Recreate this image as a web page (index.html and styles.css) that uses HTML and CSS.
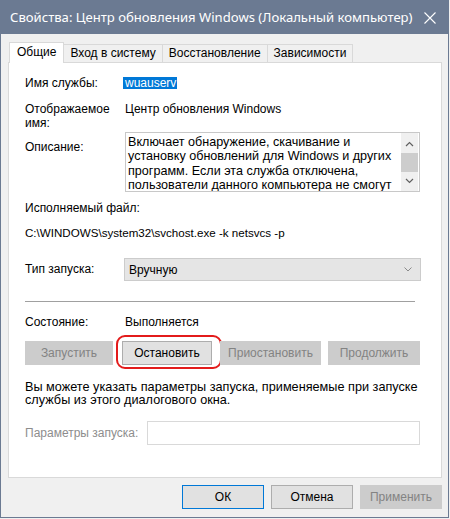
FILE: index.html
```html
<!DOCTYPE html>
<html lang="ru">
<head>
<meta charset="utf-8">
<title>Свойства</title>
<link rel="stylesheet" href="styles.css">
</head>
<body>
<div class="window">
  <div class="titlebar">
    <span class="title">Свойства: Центр обновления Windows (Локальный компьютер)</span>
    <svg class="close" width="12" height="12" viewBox="0 0 12 12"><path d="M0.5 0.5 L11.5 11.5 M11.5 0.5 L0.5 11.5" stroke="#fff" stroke-width="1.1" fill="none"/></svg>
  </div>
  <div class="body">
    <div class="tabs">
      <div class="tab active">Общие</div>
      <div class="tab">Вход в систему</div>
      <div class="tab">Восстановление</div>
      <div class="tab">Зависимости</div>
    </div>
    <div class="panel">
      <div class="row r-name">
        <div class="label">Имя службы:</div>
        <div class="value"><span class="sel">wuauserv</span></div>
      </div>
      <div class="row r-disp">
        <div class="label">Отображаемое<br>имя:</div>
        <div class="value">Центр обновления Windows</div>
      </div>
      <div class="row r-desc">
        <div class="label desc-label">Описание:</div>
        <div class="textbox">
          <div class="tb-text">Включает обнаружение, скачивание и установку обновлений для Windows и других программ. Если эта служба отключена, пользователи данного компьютера не смогут</div>
          <div class="scrollbar">
            <svg class="arr" width="9" height="6" viewBox="0 0 9 6"><path d="M1 5 L4.5 1.5 L8 5" stroke="#606060" stroke-width="1.2" fill="none"/></svg>
            <div class="thumb"></div>
            <svg class="arr" width="9" height="6" viewBox="0 0 9 6"><path d="M1 1 L4.5 4.5 L8 1" stroke="#606060" stroke-width="1.2" fill="none"/></svg>
          </div>
        </div>
      </div>
      <div class="line r-exe">Исполняемый файл:</div>
      <div class="line r-path">C:\WINDOWS\system32\svchost.exe -k netsvcs -p</div>
      <div class="row r-type">
        <div class="label">Тип запуска:</div>
        <div class="combo">
          <span>Вручную</span>
          <svg width="8" height="5" viewBox="0 0 8 5"><path d="M0.5 0.5 L4 4 L7.5 0.5" stroke="#8a8a8a" stroke-width="1" fill="none"/></svg>
        </div>
      </div>
      <div class="sep"></div>
      <div class="row r-state">
        <div class="label">Состояние:</div>
        <div class="value">Выполняется</div>
      </div>
      <div class="buttons">
        <div class="btn disabled b1">Запустить</div>
        <div class="btn b2">Остановить<span class="ring"></span></div>
        <div class="btn disabled b3">Приостановить</div>
        <div class="btn disabled b4">Продолжить</div>
      </div>
      <div class="note">Вы можете указать параметры запуска, применяемые при запуске службы из этого диалогового окна.</div>
      <div class="row r-params">
        <div class="plabel">Параметры запуска:</div>
        <div class="input"></div>
      </div>
    </div>
    <div class="footer">
      <div class="btn fbtn default">ОК</div>
      <div class="btn fbtn">Отмена</div>
      <div class="btn fbtn disabled">Применить</div>
    </div>
  </div>
</div>
</body>
</html>
```
FILE: styles.css
```css
html, body {
  margin: 0;
  padding: 0;
  background: #f0f0f0;
}
body {
  font-family: "Liberation Sans", Arial, sans-serif;
  font-size: 12px;
  color: #000;
}
.window {
  width: 447px;
  height: 517px;
  border: 1px solid #6b7a92;
  border-top: none;
  background: #f0f0f0;
}
.titlebar {
  height: 34px;
  background: #6b7a92;
  display: flex;
  align-items: center;
  justify-content: space-between;
  padding: 0 13px 0 10px;
  margin: 0 -1px;
}
.title {
  color: #fff;
  font-family: "Noto Sans", "Open Sans", sans-serif;
  font-size: 13.1px;
  white-space: nowrap;
}
.close {
  display: block;
  margin-top: 1px;
}
.body {
  padding: 9px 6px 0 7px;
}
.tabs {
  display: flex;
  align-items: flex-end;
  height: 19px;
  margin-left: 1px;
  position: relative;
  z-index: 1;
}
.tab {
  height: 17px;
  line-height: 17px;
  padding: 0 6px;
  background: #f0f0f0;
  border: 1px solid #d9d9d9;
  border-bottom: none;
  margin-left: -1px;
  white-space: nowrap;
}
.tab.active {
  height: 20px;
  line-height: 19px;
  background: #fff;
  padding: 0 7px;
  margin-left: 0;
  margin-bottom: -1px;
  position: relative;
  z-index: 2;
}
.panel {
  background: #fff;
  border: 1px solid #d9d9d9;
  height: 401px;
  padding: 13px 20px 0 16px;
  box-sizing: content-box;
}
.row {
  display: flex;
  align-items: flex-start;
}
.label {
  width: 100px;
  flex: none;
  line-height: 14px;
}
.value {
  line-height: 14px;
}
.sel {
  background: #0078d7;
  color: #fff;
  display: inline-block;
  line-height: 12px;
  height: 12px;
  padding: 0 1px 0 2px;
  margin-left: -2px;
}
.r-name { height: 14px; }
.r-disp { margin-top: 12px; }
.r-desc { margin-top: 2px; }
.desc-label { padding-top: 8px; }
.textbox {
  width: 293px;
  height: 58px;
  border: 1px solid #c8c8c8;
  display: flex;
  box-sizing: content-box;
}
.tb-text {
  flex: 1;
  padding: 2px 0 0 2px;
  font-size: 12.6px;
  line-height: 14.3px;
  overflow: hidden;
}
.scrollbar {
  width: 17px;
  background: #f0f0f0;
  display: flex;
  flex-direction: column;
  align-items: center;
  justify-content: space-between;
  padding: 8px 0 7px;
  margin: 0 1px 0 0;
}
.arr { display: block; }
.thumb {
  width: 17px;
  height: 19px;
  background: #cdcdcd;
}
.line { line-height: 14px; }
.r-exe { margin-top: 9px; }
.r-path { margin-top: 11px; font-size: 11.6px; }
.r-type {
  margin-top: 18px;
  align-items: center;
}
.r-type .label { margin-top: -2px; }
.combo {
  width: 286px;
  height: 21px;
  background: #e5e5e5;
  border: 1px solid #cccccc;
  display: flex;
  align-items: center;
  justify-content: space-between;
  padding: 0 8px 0 4px;
  margin-left: -1px;
  box-sizing: content-box;
}
.combo svg { display: block; }
.sep {
  margin-top: 20px;
  height: 1px;
  background: #a0a0a0;
  width: 390px;
}
.r-state { margin-top: 13px; }
.buttons {
  display: flex;
  margin-top: 12px;
}
.btn {
  height: 22px;
  line-height: 22px;
  text-align: center;
  background: #e1e1e1;
  border: 1px solid #adadad;
  white-space: nowrap;
  position: relative;
}
.btn.disabled {
  background: #cccccc;
  border-color: #cccccc;
  color: #838383;
}
.b1 { width: 86px; }
.b2 { width: 88px; margin-left: 9px; }
.b3 { width: 99px; margin-left: 8px; }
.b4 { width: 90px; margin-left: 7px; }
.ring {
  position: absolute;
  left: -7px;
  top: -7px;
  right: -11px;
  bottom: -5px;
  border: 2px solid #e31b1b;
  border-radius: 9px;
}
.note {
  margin-top: 16px;
  font-size: 12.7px;
  line-height: 13px;
  width: 400px;
}
.r-params {
  margin-top: 14px;
  align-items: center;
}
.plabel {
  color: #8d8d8d;
  width: 122px;
  flex: none;
  white-space: nowrap;
}
.input {
  width: 271px;
  height: 22px;
  border: 1px solid #d9d9d9;
  background: #fff;
}
.footer {
  display: flex;
  justify-content: flex-end;
  gap: 7px;
  margin-top: 7px;
}
.fbtn { width: 80px; }
.fbtn.default {
  border-color: #0078d7;
}
```
